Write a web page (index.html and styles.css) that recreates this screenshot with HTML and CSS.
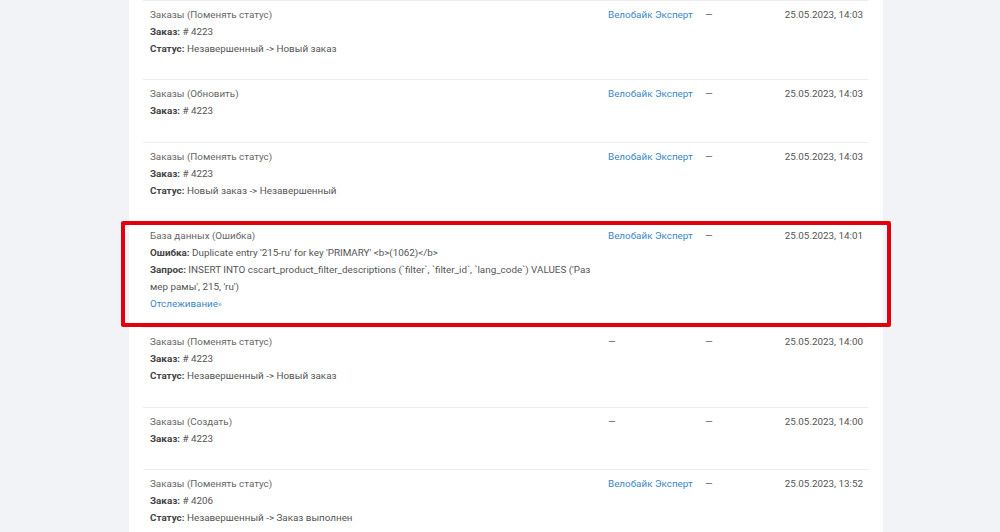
FILE: index.html
```html
<!DOCTYPE html>
<html lang="ru">
<head>
<meta charset="utf-8">
<title>Журнал</title>
<link rel="stylesheet" href="styles.css">
</head>
<body>
<div class="panel">
  <div class="log">
    <div class="row">
      <div class="desc">
        <div class="title">Заказы (Поменять статус)</div>
        <div><b>Заказ:</b> # 4223</div>
        <div><b>Статус:</b> Незавершенный -&gt; Новый заказ</div>
      </div>
      <div class="user"><a href="#">Велобайк Эксперт</a></div>
      <div class="ip">—</div>
      <div class="date">25.05.2023, 14:03</div>
    </div>
    <div class="row">
      <div class="desc">
        <div class="title">Заказы (Обновить)</div>
        <div><b>Заказ:</b> # 4223</div>
      </div>
      <div class="user"><a href="#">Велобайк Эксперт</a></div>
      <div class="ip">—</div>
      <div class="date">25.05.2023, 14:03</div>
    </div>
    <div class="row">
      <div class="desc">
        <div class="title">Заказы (Поменять статус)</div>
        <div><b>Заказ:</b> # 4223</div>
        <div><b>Статус:</b> Новый заказ -&gt; Незавершенный</div>
      </div>
      <div class="user"><a href="#">Велобайк Эксперт</a></div>
      <div class="ip">—</div>
      <div class="date">25.05.2023, 14:03</div>
    </div>
    <div class="row row-db">
      <div class="desc">
        <div class="title">База данных (Ошибка)</div>
        <div><b>Ошибка:</b> Duplicate entry '215-ru' for key 'PRIMARY' &lt;b&gt;(1062)&lt;/b&gt;</div>
        <div class="query"><b>Запрос:</b> INSERT INTO cscart_product_filter_descriptions (`filter`, `filter_id`, `lang_code`) VALUES ('Раз<br>мер рамы', 215, 'ru')</div>
        <div><a href="#" class="trace">Отслеживание<span class="raquo">››</span></a></div>
      </div>
      <div class="user"><a href="#">Велобайк Эксперт</a></div>
      <div class="ip">—</div>
      <div class="date">25.05.2023, 14:01</div>
      <div class="highlight"></div>
    </div>
    <div class="row">
      <div class="desc">
        <div class="title">Заказы (Поменять статус)</div>
        <div><b>Заказ:</b> # 4223</div>
        <div><b>Статус:</b> Незавершенный -&gt; Новый заказ</div>
      </div>
      <div class="user">—</div>
      <div class="ip">—</div>
      <div class="date">25.05.2023, 14:00</div>
    </div>
    <div class="row">
      <div class="desc">
        <div class="title">Заказы (Создать)</div>
        <div><b>Заказ:</b> # 4223</div>
      </div>
      <div class="user">—</div>
      <div class="ip">—</div>
      <div class="date">25.05.2023, 14:00</div>
    </div>
    <div class="row">
      <div class="desc">
        <div class="title">Заказы (Поменять статус)</div>
        <div><b>Заказ:</b> # 4206</div>
        <div><b>Статус:</b> Незавершенный -&gt; Заказ выполнен</div>
      </div>
      <div class="user"><a href="#">Велобайк Эксперт</a></div>
      <div class="ip">—</div>
      <div class="date">25.05.2023, 13:52</div>
    </div>
  </div>
</div>
</body>
</html>
```

FILE: styles.css
```css
html, body {
  margin: 0;
  padding: 0;
}
body {
  background: #f1f3f6;
  font-family: Roboto, "Liberation Sans", Arial, sans-serif;
  font-size: 9.85px;
  line-height: 16.8px;
  color: #555;
  height: 532px;
  overflow: hidden;
}
.panel {
  margin-left: 129px;
  width: 754px;
  min-height: 532px;
  background: #fff;
  padding: 0 15px 0 14px;
  box-sizing: border-box;
}
.log {
  display: flex;
  flex-direction: column;
}
.row {
  position: relative;
  display: grid;
  grid-template-columns: 458px 97px 1fr auto;
  align-items: start;
  border-top: 1px solid #ebedf0;
  padding: 6px 5px 22px 7px;
}
.row-db {
  padding-bottom: 14px;
}
.title {
  color: #666;
}
.desc b {
  font-weight: 700;
  color: #444;
}
.query {
  white-space: nowrap;
}
a {
  color: #3a87c6;
  text-decoration: none;
}
.trace {
  color: #3a87c6;
}
.raquo {
  font-size: 7px;
  letter-spacing: -0.5px;
}
.date {
  text-align: right;
  color: #555;
}
.highlight {
  position: absolute;
  left: -22px;
  right: -23px;
  top: -1px;
  bottom: 0;
  border: 4px solid #e4000a;
  border-radius: 2px;
  pointer-events: none;
}
```
